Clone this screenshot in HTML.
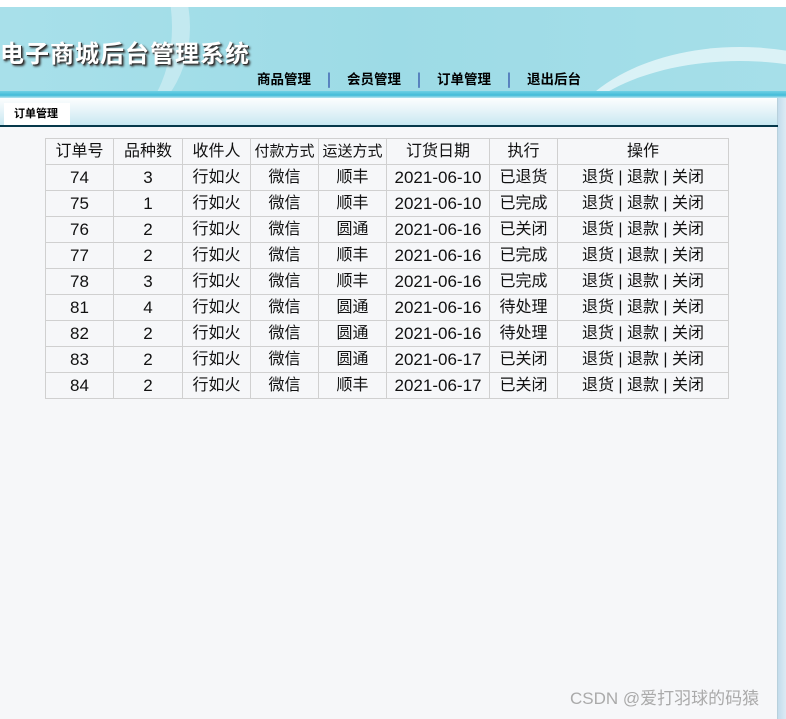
<!DOCTYPE html>
<html><head><meta charset="utf-8"><style>
*{margin:0;padding:0;box-sizing:border-box}
body{width:786px;height:719px;overflow:hidden;background:#fff;font-family:"Liberation Sans","Noto Sans CJK SC",sans-serif;position:relative}
#hdr{position:absolute;left:0;top:7px;width:786px;height:86px;background:linear-gradient(90deg,#a8e0ea 0%,#9ddbe6 50%,#a6dfe9 100%);overflow:hidden}
#hdr .arc{position:absolute;left:560px;top:40px;width:360px;height:220px;border-radius:50%;border-top:14px solid rgba(255,255,255,.6)}
#hdr .arc2{position:absolute;left:30px;top:-80px;width:160px;height:200px;border-radius:50%;border-right:18px solid rgba(255,255,255,.35)}
#title{position:absolute;left:0;top:30px;font-size:24px;line-height:30px;font-weight:bold;color:#fff;letter-spacing:1px;text-shadow:1px 1px 0 #333,2px 2px 2px #333;font-family:"Noto Sans CJK SC",sans-serif}
#nav{position:absolute;left:257px;top:62px;font-size:13.5px;line-height:18px;font-weight:bold;color:#000;font-family:"Noto Sans CJK SC",sans-serif;white-space:nowrap}
#nav span{color:#3355aa;margin:0 16px}
#band{position:absolute;left:0;top:91px;width:786px;height:7px;background:linear-gradient(#6fd0e4,#43bcd8 60%,#b9e6f0)}
#side{position:absolute;left:778px;top:98px;width:8px;height:621px;background:linear-gradient(90deg,#c3dcec,#dceaf4)}
#tabbar{position:absolute;left:0;top:98px;width:778px;height:27px;background:linear-gradient(#fdfefe,#e4f3f8 50%,#c8e8f1);border-right:1px solid #b8d0dc}
#tab{position:absolute;left:4px;top:103px;width:66px;height:23px;background:#fff;font-size:11px;line-height:16px;font-weight:bold;padding:2px 0 0 10px;font-family:"Noto Sans CJK SC",sans-serif}
#line{position:absolute;left:0;top:125px;width:778px;height:2px;background:#06384a}
#main{position:absolute;left:0;top:127px;width:778px;height:592px;background:#f6f7f9;border-right:1px solid #b8d0dc}
table{position:absolute;left:45px;top:11px;border-collapse:collapse;font-size:16px;font-family:"Liberation Sans","Noto Sans CJK SC",sans-serif;color:#111;table-layout:fixed;width:683px}
td{border:1px solid #d0d0d0;height:26px;text-align:center;padding:0;line-height:24px;white-space:nowrap;overflow:hidden}
.d{font-size:17px}
#wm{position:absolute;left:570px;top:688px;font-size:17px;line-height:22px;color:#aaa;font-family:"Liberation Sans","Noto Sans CJK SC",sans-serif}
</style></head><body>
<div id="hdr"><div class="arc2"></div><div class="arc"></div><div id="title">电子商城后台管理系统</div>
<div id="nav">商品管理<span>|</span>会员管理<span>|</span>订单管理<span>|</span>退出后台</div></div>
<div id="band"></div>
<div id="tabbar"></div><div id="tab">订单管理</div><div id="line"></div>
<div id="main">
<table>
<colgroup><col style="width:68px"><col style="width:69px"><col style="width:68px"><col style="width:68px"><col style="width:68px"><col style="width:103px"><col style="width:68px"><col style="width:171px"></colgroup>
<tr><td>订单号</td><td>品种数</td><td>收件人</td><td style="font-size:15px">付款方式</td><td style="font-size:15px">运送方式</td><td>订货日期</td><td>执行</td><td>操作</td></tr>
<tr><td class="d">74</td><td class="d">3</td><td>行如火</td><td>微信</td><td>顺丰</td><td class="d">2021-06-10</td><td>已退货</td><td>退货 | 退款 | 关闭</td></tr>
<tr><td class="d">75</td><td class="d">1</td><td>行如火</td><td>微信</td><td>顺丰</td><td class="d">2021-06-10</td><td>已完成</td><td>退货 | 退款 | 关闭</td></tr>
<tr><td class="d">76</td><td class="d">2</td><td>行如火</td><td>微信</td><td>圆通</td><td class="d">2021-06-16</td><td>已关闭</td><td>退货 | 退款 | 关闭</td></tr>
<tr><td class="d">77</td><td class="d">2</td><td>行如火</td><td>微信</td><td>顺丰</td><td class="d">2021-06-16</td><td>已完成</td><td>退货 | 退款 | 关闭</td></tr>
<tr><td class="d">78</td><td class="d">3</td><td>行如火</td><td>微信</td><td>顺丰</td><td class="d">2021-06-16</td><td>已完成</td><td>退货 | 退款 | 关闭</td></tr>
<tr><td class="d">81</td><td class="d">4</td><td>行如火</td><td>微信</td><td>圆通</td><td class="d">2021-06-16</td><td>待处理</td><td>退货 | 退款 | 关闭</td></tr>
<tr><td class="d">82</td><td class="d">2</td><td>行如火</td><td>微信</td><td>圆通</td><td class="d">2021-06-16</td><td>待处理</td><td>退货 | 退款 | 关闭</td></tr>
<tr><td class="d">83</td><td class="d">2</td><td>行如火</td><td>微信</td><td>圆通</td><td class="d">2021-06-17</td><td>已关闭</td><td>退货 | 退款 | 关闭</td></tr>
<tr><td class="d">84</td><td class="d">2</td><td>行如火</td><td>微信</td><td>顺丰</td><td class="d">2021-06-17</td><td>已关闭</td><td>退货 | 退款 | 关闭</td></tr>
</table>
</div>
<div id="side"></div>
<div id="wm">CSDN @爱打羽球的码猿</div>
</body></html>
